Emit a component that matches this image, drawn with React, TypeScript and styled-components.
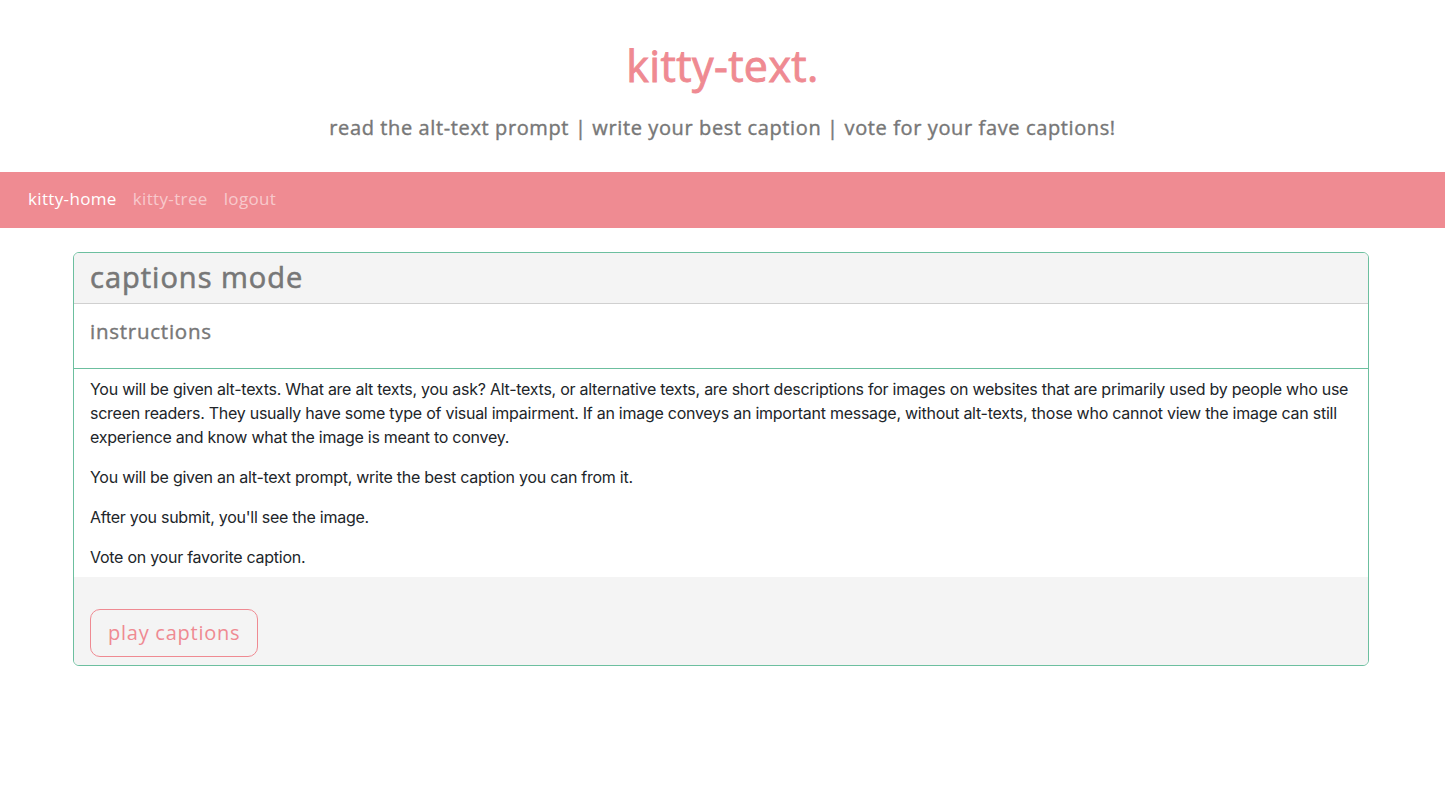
import React from "react";
import styled, { createGlobalStyle } from "styled-components";

const Global = createGlobalStyle`
  html, body { margin: 0; padding: 0; background: #fff; }
  body { font-family: Inter, "Liberation Sans", sans-serif; color: #212529; }
  * { box-sizing: border-box; }
`;

const heading = `"Open Sans", "DejaVu Sans", sans-serif`;

const Header = styled.header`
  display: flex;
  flex-direction: column;
  align-items: center;
  padding-top: 38px;
  padding-bottom: 30px;
`;

const Title = styled.h1`
  margin: 0;
  font-family: ${heading};
  font-weight: 400;
  font-size: 43px;
  line-height: 56px;
  color: #ef8a92;
  letter-spacing: 0.4px;
  -webkit-text-stroke: 0.9px #ef8a92;
`;

const Subtitle = styled.p`
  margin: 20px 0 0;
  font-family: ${heading};
  font-weight: 400;
  font-size: 20px;
  line-height: 28px;
  color: #777;
  letter-spacing: 0.62px;
  -webkit-text-stroke: 0.4px #777;
`;

const Nav = styled.nav`
  display: flex;
  align-items: center;
  gap: 16px;
  height: 56px;
  padding: 0 28px 4px;
  background: #ef8b92;
`;

const NavLink = styled.a<{ $active?: boolean }>`
  font-family: ${heading};
  font-size: 17px;
  letter-spacing: 0.35px;
  text-decoration: none;
  color: ${(p) => (p.$active ? "#fff" : "rgba(255,255,255,0.55)")};
  cursor: pointer;
`;

const Main = styled.main`
  padding: 24px 3px 24px 0;
`;

const Card = styled.section`
  max-width: 1296px;
  margin: 0 auto;
  border: 1px solid #6cbf9f;
  border-radius: 6px;
  overflow: hidden;
`;

const CardHeader = styled.div`
  background: #f4f4f4;
  border-bottom: 1px solid #d0d0d0;
  padding: 0 16px 4px;
  height: 51px;
  display: flex;
  align-items: center;
`;

const CardTitle = styled.h2`
  margin: 0;
  font-family: ${heading};
  font-weight: 400;
  font-size: 29px;
  color: #777;
  letter-spacing: 1px;
  -webkit-text-stroke: 0.6px #777;
`;

const Section = styled.div`
  padding: 15px 16px 0;
  height: 65px;
  border-bottom: 1px solid #6cbf9f;
`;

const SectionTitle = styled.h3`
  margin: 0;
  font-family: ${heading};
  font-weight: 400;
  font-size: 20.5px;
  line-height: 24px;
  color: #777;
  letter-spacing: 0.75px;
  -webkit-text-stroke: 0.4px #777;
`;

const Body = styled.div`
  padding: 8px 16px 0;
`;

const Para = styled.p`
  margin: 0 0 16px;
  font-size: 16px;
  line-height: 24px;
  letter-spacing: -0.26px;
  color: #212529;
`;

const Footer = styled.div`
  background: #f4f4f4;
  padding: 32px 16px 8px;
  margin-top: -8px;
`;

const Button = styled.button`
  height: 48px;
  padding: 0 17px 2px;
  border: 1px solid #ef8a92;
  border-radius: 10px;
  background: transparent;
  font-family: ${heading};
  font-weight: 400;
  font-size: 20px;
  color: #ef8a92;
  cursor: pointer;
  letter-spacing: 0.75px;
`;

export default function App() {
  return (
    <>
      <Global />
      <Header>
        <Title>kitty-text.</Title>
        <Subtitle>
          read the alt-text prompt | write your best caption | vote for your fave captions!
        </Subtitle>
      </Header>
      <Nav>
        <NavLink $active>kitty-home</NavLink>
        <NavLink>kitty-tree</NavLink>
        <NavLink>logout</NavLink>
      </Nav>
      <Main>
        <Card>
          <CardHeader>
            <CardTitle>captions mode</CardTitle>
          </CardHeader>
          <Section>
            <SectionTitle>instructions</SectionTitle>
          </Section>
          <Body>
            <Para>
              You will be given alt-texts. What are alt texts, you ask? Alt-texts, or alternative texts,
              are short descriptions for images on websites that are primarily used by people who use
              screen readers. They usually have some type of visual impairment. If an image conveys an
              important message, without alt-texts, those who cannot view the image can still experience
              and know what the image is meant to convey.
            </Para>
            <Para>You will be given an alt-text prompt, write the best caption you can from it.</Para>
            <Para>After you submit, you'll see the image.</Para>
            <Para>Vote on your favorite caption.</Para>
          </Body>
          <Footer>
            <Button>play captions</Button>
          </Footer>
        </Card>
      </Main>
    </>
  );
}
